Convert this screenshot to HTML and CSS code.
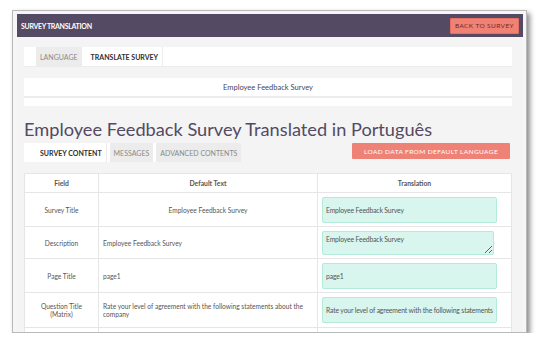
FILE: index.html
```html
<!DOCTYPE html>
<html lang="en">
<head>
    <meta charset="UTF-8">
    <meta name="viewport" content="width=device-width, initial-scale=1.0">
    <title>Survey Translation</title>
    <link rel="stylesheet" href="styles.css">
</head>
<body>
    <div class="window">
        <div class="topbar">
            <span class="topbar-title">SURVEY TRANSLATION</span>
            <button class="back">BACK TO SURVEY</button>
        </div>
        <div class="content">
            <div class="tabs wide">
                <span class="tab">LANGUAGE</span>
                <span class="tab active">TRANSLATE SURVEY</span>
            </div>

            <div class="card">
                <div class="card-title">Employee Feedback Survey</div>
                <div class="card-body"></div>
            </div>

            <h1>Employee Feedback Survey Translated in Português</h1>

            <div class="toolbar">
                <div class="tabs">
                    <span class="tab active">SURVEY CONTENT</span>
                    <span class="tab">MESSAGES</span>
                    <span class="tab">ADVANCED CONTENTS</span>
                </div>
                <button class="load">LOAD DATA FROM DEFAULT LANGUAGE</button>
            </div>

            <table class="grid">
                <colgroup>
                    <col class="c-field">
                    <col class="c-default">
                    <col class="c-trans">
                </colgroup>
                <thead>
                    <tr>
                        <th>Field</th>
                        <th>Default Text</th>
                        <th>Translation</th>
                    </tr>
                </thead>
                <tbody>
                    <tr class="r1">
                        <td class="field">Survey Title</td>
                        <td class="center">Employee Feedback Survey</td>
                        <td><input class="tr-input" value="Employee Feedback Survey"></td>
                    </tr>
                    <tr class="r2">
                        <td class="field">Description</td>
                        <td>Employee Feedback Survey</td>
                        <td><textarea class="tr-input tr-area">Employee Feedback Survey</textarea></td>
                    </tr>
                    <tr class="r3">
                        <td class="field">Page Title</td>
                        <td>page1</td>
                        <td><input class="tr-input" value="page1"></td>
                    </tr>
                    <tr class="r4">
                        <td class="field">Question Title<br>(Matrix)</td>
                        <td>Rate your level of agreement with the following statements about the company</td>
                        <td><input class="tr-input" value="Rate your level of agreement with the following statements about the company"></td>
                    </tr>
                    <tr class="r5">
                        <td class="field">&nbsp;</td>
                        <td></td>
                        <td></td>
                    </tr>
                </tbody>
            </table>
        </div>
    </div>
</body>
</html>
```

FILE: styles.css
```css
* {
    margin: 0;
    padding: 0;
    box-sizing: border-box;
}

body {
    font-family: Lato, 'Noto Sans', sans-serif;
    background: #ffffff;
    padding: 10px 0 0 12px;
    overflow: hidden;
}

.window {
    width: 515px;
    height: 323px;
    background: #f6f6f6;
    border: 1px solid #b9b9b9;
    padding: 3px 3px 0 4px;
    box-shadow: 3px 3px 5px rgba(0, 0, 0, 0.45);
    overflow: hidden;
}

.topbar {
    height: 23px;
    background: #544a63;
    display: flex;
    align-items: center;
    justify-content: space-between;
    padding: 0 4px 0 4px;
}

.topbar-title {
    color: #ffffff;
    font-weight: 700;
    font-size: 7px;
    letter-spacing: -0.3px;
}

button {
    font-family: Lato, 'Noto Sans', sans-serif;
    border: none;
    cursor: pointer;
}

.back {
    background: #f18173;
    color: #6a2b2b;
    font-size: 6.5px;
    letter-spacing: 0.4px;
    height: 16px;
    padding: 0 4px;
    border: 1px solid #e27064;
    border-radius: 1px;
}

.content {
    background: #f4f4f4;
    height: 300px;
    padding: 10px 11px 0 7px;
}

.tabs {
    display: flex;
    gap: 5px;
    background: #ffffff;
    height: 20px;
    padding-left: 12px;
}

.tabs.wide {
    border-bottom: 1px solid #ececec;
}

.tab {
    display: flex;
    align-items: center;
    padding: 0 4px;
    font-size: 7px;
    color: #8a8a8a;
    background: #ececec;
}

.tab.active {
    background: #ffffff;
    color: #2f2f2f;
    font-weight: 700;
    border-right: 1px solid #ececec;
}

.card {
    margin-top: 11px;
}

.card-title {
    background: #ffffff;
    height: 20px;
    line-height: 20px;
    text-align: center;
    font-size: 7.5px;
    color: #4a4458;
    border-bottom: 2px solid #ececec;
}

.card-body {
    background: #ffffff;
    height: 8px;
}

h1 {
    font-weight: 400;
    font-size: 18.2px;
    color: #534a63;
    margin-top: 10px;
    line-height: 26px;
}

.toolbar {
    display: flex;
    justify-content: space-between;
    align-items: flex-start;
    margin-top: 1px;
    height: 19px;
}

.toolbar .tabs {
    height: 19px;
    gap: 3px;
}

.load {
    background: #ef8277;
    color: #ffffff;
    font-size: 6.5px;
    letter-spacing: 0.4px;
    height: 16px;
    width: 158px;
    margin-right: 2px;
    border-radius: 1px;
}

.grid {
    margin-top: 11px;
    width: 487px;
    border-collapse: collapse;
    background: #ffffff;
    table-layout: fixed;
    font-size: 6.6px;
    color: #555555;
}

.c-field { width: 74px; }
.c-default { width: 219px; }
.c-trans { width: 194px; }

.grid th,
.grid td {
    border: 1px solid #e6e6e6;
    padding: 0 4px;
    vertical-align: middle;
}

.grid th {
    height: 19px;
    font-weight: 700;
    font-size: 6.8px;
    color: #555555;
}

.grid td.field,
.grid td.center {
    text-align: center;
}

.r1 td { height: 34px; }
.r2 td { height: 32px; }
.r3 td { height: 34px; }
.r4 td { height: 35px; }
.r5 td { height: 30px; }

.tr-input {
    display: block;
    width: 175px;
    height: 26px;
    background: #d8f5ee;
    border: 1px solid #b3ead9;
    border-radius: 2px;
    font-family: Lato, 'Noto Sans', sans-serif;
    font-weight: 400;
    font-size: 6.8px;
    letter-spacing: -0.15px;
    color: #555555;
    padding: 0 2px 0 3px;
    outline: none;
}

.tr-area {
    width: 172px;
    height: 24px;
    padding: 3px 3px;
    resize: vertical;
}
```
